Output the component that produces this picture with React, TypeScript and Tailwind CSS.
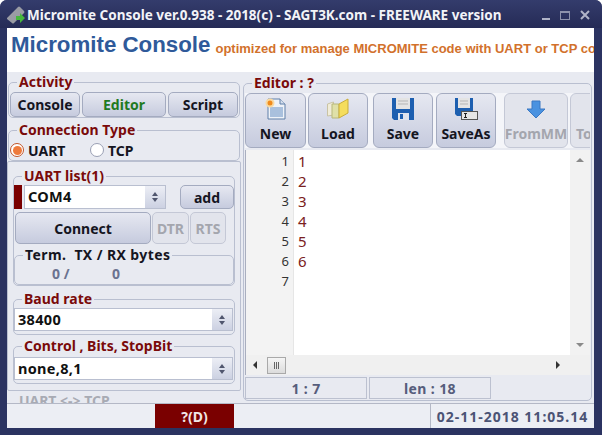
import React from 'react';

const GroupBox: React.FC<{ title: string; className?: string; bodyClass?: string; titleClass?: string; children: React.ReactNode }> = ({ title, className = '', bodyClass = '', titleClass = 'text-[#7a0a0a]', children }) => (
  <fieldset className={`min-w-0 rounded-[5px] border border-[#b9bfd0] ${className}`}>
    <legend className={`ml-[8px] h-[16px] whitespace-pre px-[2px] text-[14px] leading-[16px] font-bold ${titleClass}`}>{title}</legend>
    <div className={bodyClass}>{children}</div>
  </fieldset>
);

const Btn: React.FC<{ label: string; className?: string; off?: boolean; textClass?: string }> = ({ label, className = '', off, textClass = 'text-[#15151f]' }) => (
  <button className={`flex shrink-0 items-center justify-center rounded-[5px] border text-[14px] font-bold ${off ? 'border-[#c4c8d6] bg-[#e2e4ec] text-[#a4a6ae]' : `border-[#a4abc0] bg-gradient-to-b from-[#e6e8f1] to-[#c6cbde] ${textClass}`} ${className}`}>
    {label}
  </button>
);

const Spinner: React.FC<{ value: string; className?: string }> = ({ value, className = '' }) => (
  <div className={`flex items-stretch border border-[#b9bfd0] bg-white ${className}`}>
    <span className="flex-1 pl-[3px] text-[14.500px] leading-[21px] font-bold tracking-[0.3px] text-[#111]">{value}</span>
    <span className="flex w-[20px] flex-col items-center justify-center gap-[2px] bg-gradient-to-b from-[#eceef5] to-[#ccd1e2]">
      <span className="h-0 w-0 border-x-[3px] border-b-[4px] border-x-transparent border-b-[#50566e]" />
      <span className="h-0 w-0 border-x-[3px] border-t-[4px] border-x-transparent border-t-[#50566e]" />
    </span>
  </div>
);

const IconNew = () => (
  <svg width="22" height="22" viewBox="0 0 22 22">
    <path d="M3 1h12l5 5v15H3z" fill="#eef2f8" stroke="#5f7ea8" />
    <path d="M15 1v5h5" fill="#d4deec" stroke="#5f7ea8" />
    <rect x="5" y="9" width="13" height="10" fill="#a9c0dd" />
    <circle cx="5" cy="5" r="3.500" fill="#f08a1c" stroke="#f8d9a0" strokeWidth="2" />
  </svg>
);

const IconLoad = () => (
  <svg width="22" height="22" viewBox="0 0 22 22">
    <path d="M0.500 6l6-2v13l-6 1z" fill="#f0ecd8" stroke="#c9c3a4" />
    <path d="M5 6h7v14H5z" fill="#dfe0a8" stroke="#b8b77a" />
    <path d="M12 6l9-5v14l-9 5z" fill="#f5dd5c" stroke="#c9ad3a" />
  </svg>
);

const IconSave = () => (
  <svg width="22" height="22" viewBox="0 0 22 22">
    <path d="M0 0h22v22H2l-2-2z" fill="#1d5fb0" />
    <rect x="4" y="0" width="14" height="11" fill="#e4e4e4" />
    <path d="M6 3h10M6 6h10" stroke="#b5b5b5" />
    <rect x="6" y="15" width="11" height="7" fill="#dfe5ee" />
    <rect x="8" y="16" width="3" height="5" fill="#1d5fb0" />
  </svg>
);

const IconSaveAs = () => (
  <svg width="23" height="22" viewBox="0 0 23 22">
    <path d="M0 0h18v18H2l-2-2z" fill="#1d5fb0" />
    <rect x="3" y="0" width="12" height="10" fill="#e4e4e4" />
    <path d="M5 3h8M5 6h8" stroke="#b5b5b5" />
    <rect x="6.500" y="13.500" width="16" height="8" fill="#e6e6e6" stroke="#555" />
    <path d="M9 15.500h3M10.500 15.500v4M9 19.500h3" stroke="#222" />
  </svg>
);

const IconDown = () => (
  <svg width="20" height="22" viewBox="0 0 20 22">
    <path d="M6 3h8v8h5L10 20 1 11h5z" fill="#4a92e0" stroke="#3a78c4" />
  </svg>
);

const ToolBtn: React.FC<{ label: string; icon?: React.ReactNode; className?: string; off?: boolean }> = ({ label, icon, className = '', off }) => (
  <button className={`flex h-[55px] shrink-0 flex-col items-center rounded-[6px] border ${off ? 'border-[#c4c8d6] bg-[#e2e4ec] text-[#a4a6ae]' : 'border-[#a4abc0] bg-gradient-to-b from-[#e6e8f1] to-[#c6cbde] text-[#15151f]'} ${className}`}>
    <span className="flex h-[30px] items-start pt-[4px]">{icon}</span>
    <span className="text-[14px] leading-[20px] font-bold">{label}</span>
  </button>
);

export default function App() {
  return (
    <div className="flex h-[435px] w-[602px] flex-col overflow-hidden rounded-t-[7px] bg-[#2b3361] font-['Noto_Sans',sans-serif]">
      {/* title bar */}
      <div className="flex h-[28px] shrink-0 items-center bg-gradient-to-b from-[#343c6c] to-[#252b56] pl-[7px] pr-[12px] pt-[2px]">
        <svg width="19" height="20" viewBox="0 0 19 20" className="shrink-0">
          <path d="M0 13L11 2q1-1 2 0l4 4q1 1 0 2L7 18q-1 1-2 0l-5-4z" fill="#9a9ca4" />
          <path d="M9 11h4V8l5 5-5 5v-3H9z" fill="#46b83c" />
        </svg>
        <span className="ml-px min-w-0 flex-1 whitespace-nowrap text-[13.500px] font-bold text-[#f2f3f8]">Micromite Console ver.0.938 - 2018(c) - SAGT3K.com - FREEWARE version</span>
        <span className="flex shrink-0 items-center gap-[10px]">
          <span className="mt-[7px] h-[2px] w-[8px] bg-[#aeb2c6]" />
          <span className="h-[9px] w-[10px] border border-t-2 border-[#8d92ac]" />
          <svg width="10" height="10" viewBox="0 0 10 10"><path d="M1 1l8 8M9 1l-8 8" stroke="#b0b4c8" strokeWidth="2" /></svg>
        </span>
      </div>

      <div className="ml-[7px] flex h-[400px] w-[587px] flex-col overflow-hidden bg-[#e8eaf1]">
        {/* banner */}
        <div className="flex h-[44px] shrink-0 items-start overflow-hidden whitespace-nowrap bg-white pl-[4px] pt-[3px] font-['Liberation_Sans',sans-serif] font-bold">
          <span className="text-[22.300px] leading-[28px] text-[#2f5a9a]">Micromite Console</span>
          <span className="ml-[5px] mt-[7px] text-[13px] leading-[22px] text-[#d2712c]">optimized for manage MICROMITE code with UART or TCP connection</span>
        </div>

        <div className="flex min-h-0 flex-1">
          {/* left column */}
          <div className="flex w-[234px] shrink-0 flex-col overflow-hidden">
            <GroupBox title="Activity" className="mx-px mt-[2px] h-[45px]" bodyClass="flex gap-[2px] px-px pt-[2px]">
              <Btn label="Console" className="h-[25px] w-[70px]" />
              <Btn label="Editor" textClass="text-[#1f7a1f]" className="h-[25px] w-[84px]" />
              <Btn label="Script" className="h-[25px] w-[70px]" />
            </GroupBox>
            <GroupBox title="Connection Type" className="mx-px mt-[4px] h-[39px] shrink-0" bodyClass="flex h-[20px] items-center pl-px pt-[4px] text-[14px] font-bold text-[#15151f]">
              <span className="flex h-[14px] w-[14px] items-center justify-center rounded-full border border-[#c0552a] bg-white">
                <span className="h-[9px] w-[9px] rounded-full bg-[#ee7a3c]" />
              </span>
              <span className="ml-[4px] w-[62px]">UART</span>
              <span className="h-[14px] w-[14px] rounded-full border border-[#9aa0b4] bg-white" />
              <span className="ml-[4px]">TCP</span>
            </GroupBox>
            <div className="flex h-[230px] shrink-0 flex-col rounded-[2px] border border-[#b9bfd0] px-[5px] pt-[6px]">
              <GroupBox title="UART list(1)" className="h-[118px] shrink-0" bodyClass="pt-px">
                <div className="flex h-[24px] items-stretch">
                  <span className="w-[8px] bg-[#7a0000]" />
                  <Spinner value="COM4" className="ml-[2px] w-[142px]" />
                  <Btn label="add" className="ml-[14px] w-[54px]" />
                </div>
                <div className="ml-px mt-[3px] flex gap-px">
                  <Btn label="Connect" className="h-[32px] w-[136px]" />
                  <Btn label="DTR" off className="h-[32px] w-[37px]" />
                  <Btn label="RTS" off className="h-[32px] w-[36px]" />
                </div>
                <GroupBox title="Term.  TX / RX bytes" titleClass="text-[#15151f] tracking-[0.4px]" className="mt-[3px] h-[38px]" bodyClass="flex pt-[3px] text-[14px] leading-[16px] font-bold text-[#6b7390]">
                  <span className="ml-[37px] w-[60px] whitespace-pre">0 /</span>
                  <span>0</span>
                </GroupBox>
              </GroupBox>
              <GroupBox title="Baud rate" className="mt-[5px] h-[44px] shrink-0" bodyClass="pt-px">
                <Spinner value="38400" className="h-[23px] w-[219px]" />
              </GroupBox>
              <GroupBox title="Control , Bits, StopBit" className="mt-[3px] h-[46px] shrink-0" bodyClass="pt-[3px]">
                <Spinner value="none,8,1" className="h-[23px] w-[219px]" />
              </GroupBox>
            </div>
            <div className="ml-[12px] mt-[2px] text-[14px] leading-[16px] font-bold whitespace-nowrap text-[#a8abb4]">UART &lt;-&gt; TCP</div>
          </div>

          {/* right column */}
          <GroupBox title="Editor : ?" className="ml-[2px] mt-[3px] h-[326px] w-[349px] shrink-0" bodyClass="px-px pt-[2px]">
            <div className="flex overflow-hidden bg-[#f4f5f9]">
              <ToolBtn label="New" icon={<IconNew />} className="w-[61px]" />
              <ToolBtn label="Load" icon={<IconLoad />} className="ml-[2px] w-[60px]" />
              <ToolBtn label="Save" icon={<IconSave />} className="ml-[5px] w-[60px]" />
              <ToolBtn label="SaveAs" icon={<IconSaveAs />} className="ml-[3px] w-[60px]" />
              <ToolBtn label="FromMM" icon={<IconDown />} off className="ml-[8px] w-[64px]" />
              <ToolBtn label="To" off className="ml-[2px] w-[64px] items-start pl-[5px]" />
            </div>
            <div className="mt-[2px] flex h-[225px] flex-col border-l border-[#a9aebf] bg-white">
              <div className="flex min-h-0 flex-1">
                <div className="w-[48px] border-r border-[#e6e6e6] bg-[#f3f3f3] pr-[4px] pt-px text-right text-[13px] leading-[20px] text-[#333]">
                  {[1, 2, 3, 4, 5, 6, 7].map(n => <div key={n}>{n}</div>)}
                </div>
                <div className="flex-1 pl-[4px] pt-px text-[15px] leading-[20px] text-[#7a2020]">
                  {[1, 2, 3, 4, 5, 6].map(n => <div key={n}>{n}</div>)}
                </div>
                <div className="flex w-[20px] flex-col justify-between bg-[#f2f2f2] py-[8px]">
                  <span className="mx-auto h-0 w-0 border-x-[4px] border-b-[4px] border-x-transparent border-b-[#8a8a8a]" />
                  <span className="mx-auto h-0 w-0 border-x-[4px] border-t-[4px] border-x-transparent border-t-[#8a8a8a]" />
                </div>
              </div>
              <div className="flex h-[20px] items-center bg-[#f0f0f0] pl-[7px] pr-[30px]">
                <span className="h-0 w-0 border-y-[4px] border-r-[4px] border-y-transparent border-r-[#333]" />
                <span className="ml-[10px] flex h-[17px] w-[19px] items-center justify-center gap-px border border-[#a9a9a9] bg-gradient-to-b from-[#f5f5f5] to-[#dcdcdc]">
                  <i className="h-[7px] w-px bg-[#666]" /><i className="h-[7px] w-px bg-[#666]" /><i className="h-[7px] w-px bg-[#666]" />
                </span>
                <span className="ml-auto h-0 w-0 border-y-[4px] border-l-[4px] border-y-transparent border-l-[#333]" />
              </div>
            </div>
            <div className="mt-[2px] flex h-[22px] gap-[2px] text-[14px] font-bold tracking-[0.4px] text-[#565d7c]">
              <span className="flex w-[122px] items-center justify-center whitespace-pre border border-[#bcc1d0]">1 : 7</span>
              <span className="flex w-[122px] items-center justify-center whitespace-pre border border-[#bcc1d0]">len : 18</span>
            </div>
          </GroupBox>
        </div>

        {/* status bar */}
        <div className="flex h-[25px] shrink-0 items-stretch border-t border-[#b4b8c6] bg-[#eceef4] text-[14px] font-bold">
          <span className="ml-[148px] flex w-[79px] items-center justify-center bg-[#7a0000] text-[#f0e6e6]">?(D)</span>
          <span className="ml-auto flex w-[164px] items-center justify-center border-l border-[#b4b8c6] whitespace-nowrap tracking-[1px] text-[#4b5375]">02-11-2018 11:05.14</span>
        </div>
      </div>
    </div>
  );
}
